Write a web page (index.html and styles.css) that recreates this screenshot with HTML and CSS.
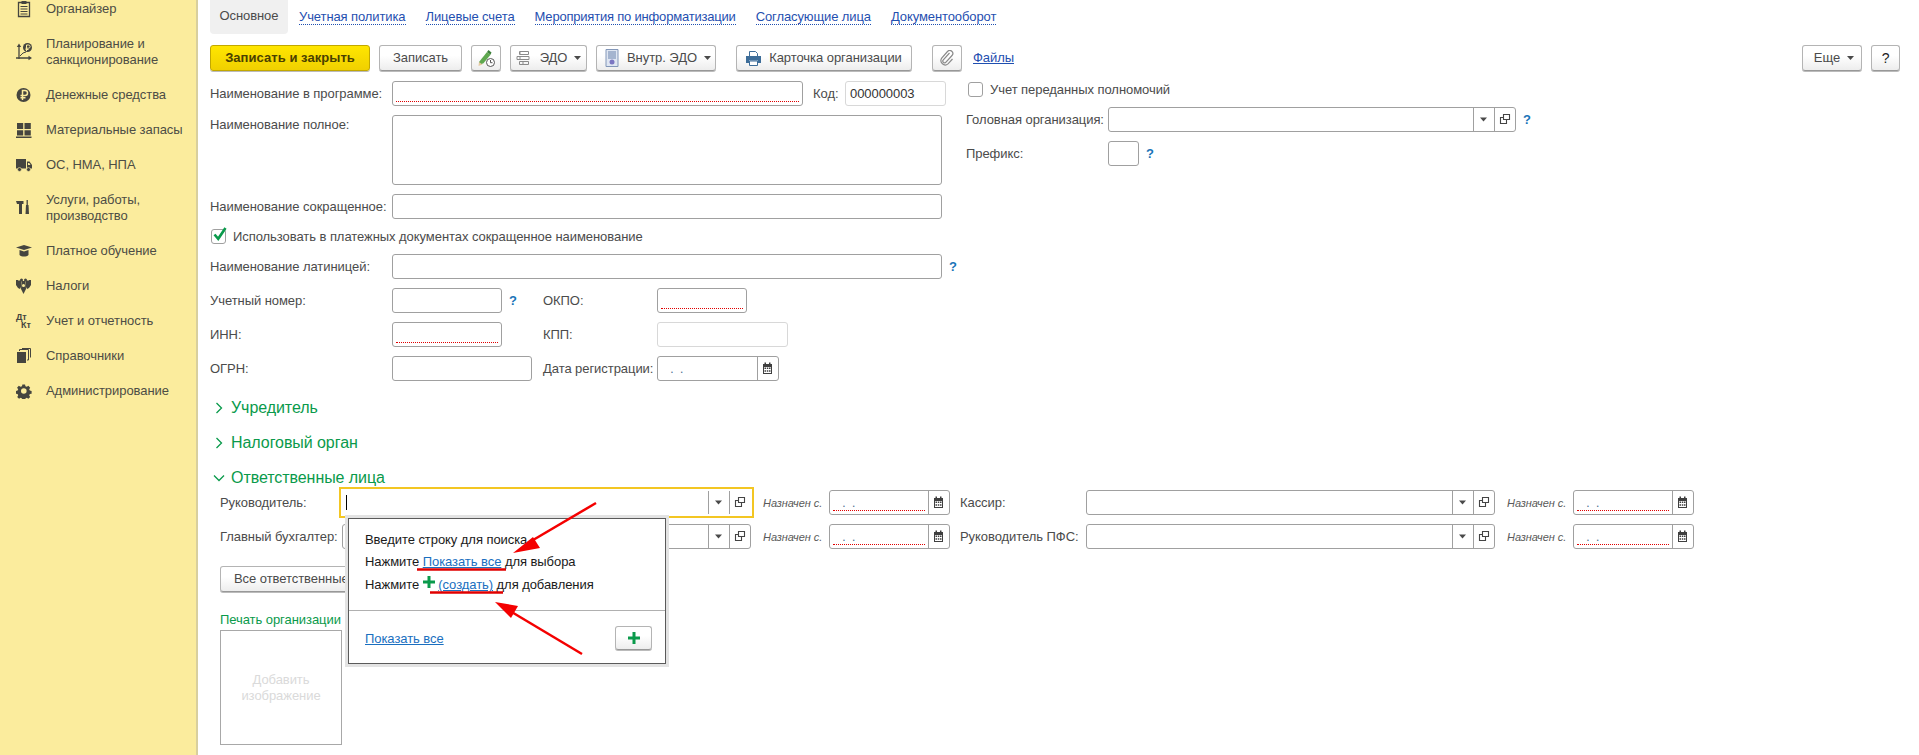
FILE: index.html
```
<!DOCTYPE html>
<html lang="ru">
<head>
<meta charset="utf-8">
<title>Организация</title>
<link rel="stylesheet" href="styles.css">
</head>
<body>
<svg class="defs" width="0" height="0">
  <symbol id="i-drop" viewBox="0 0 21 25"><path d="M7 10.500h7l-3.500 4z" fill="#4a4a4a"/></symbol>
  <symbol id="i-open" viewBox="0 0 21 25"><path d="M9.500 7.500h6v5h-6z M9.500 10.500h-3v6h6v-4" fill="none" stroke="#444" stroke-width="1.100"/></symbol>
  <symbol id="i-cal" viewBox="0 0 21 25"><path d="M6 8h9v10H6z" fill="#3f3f3f"/><path d="M7.500 6.500h1.500v2.500H7.500zM12 6.500h1.500v2.500H12z" fill="#3f3f3f"/><path d="M7 11h7v6H7z" fill="#fff"/><path d="M7.500 11.500h1.500v1.500H7.500zM9.800 11.500h1.500v1.500H9.800zM12 11.500h1.500v1.500H12zM7.500 14.300h1.500v1.500H7.500zM9.800 14.300h1.500v1.500H9.800zM12 14.300h1.500v1.500H12z" fill="#3f3f3f"/></symbol>
  <symbol id="i-plus" viewBox="0 0 12 12"><path d="M4.500 0h3v4.500H12v3H7.500V12h-3V7.500H0v-3h4.500z" fill="#0a9a4b"/></symbol>
  <symbol id="i-caret" viewBox="0 0 7 4"><path d="M0 0h7L3.500 4z" fill="#4a4a4a"/></symbol>
</svg>

<aside class="side">
  <nav class="nav">
    <a class="nav-item"><span class="nav-ic"><svg width="16" height="18" viewBox="0 0 16 18"><path d="M2.500 2.500h11v14h-11z" fill="none" stroke="#45453f" stroke-width="1.300"/><path d="M5.500 1h5v3h-5z" fill="#45453f"/><path d="M4.500 6.500h7M4.500 9h7M4.500 11.500h7M4.500 14h7" stroke="#45453f"/></svg></span><span>Органайзер</span></a>
    <a class="nav-item"><span class="nav-ic"><svg width="17" height="18" viewBox="0 0 17 18"><path d="M3 16V3M0 15h14" fill="none" stroke="#45453f" stroke-width="1.300"/><path d="M3 0.500L.8 4h4.400zM16 15l-3.500-2.200v4.400z" fill="#45453f"/><path d="M4 13l3-3 3-1" fill="none" stroke="#45453f"/><circle cx="11.500" cy="4.500" r="4.500" fill="#45453f"/><path d="M10.500 8V2h2a1.500 1.500 0 0 1 0 3.200h-3M9.500 6.500h3" fill="none" stroke="#fbec9d"/></svg></span><span>Планирование и<br>санкционирование</span></a>
    <a class="nav-item"><span class="nav-ic"><svg width="16" height="16" viewBox="0 0 16 16"><circle cx="7.500" cy="8" r="7" fill="#45453f"/><path d="M6.500 13V3.500h2.500a2.500 2.500 0 0 1 0 5H4.500M4.500 10.700h5" fill="none" stroke="#fbec9d" stroke-width="1.500"/></svg></span><span>Денежные средства</span></a>
    <a class="nav-item"><span class="nav-ic"><svg width="16" height="16" viewBox="0 0 16 16"><path d="M1 1h6.200v6H1zM8.500 1h6.300v6H8.500zM1 8.200h6.200v5.300H1zM8.500 8.200h6.300v5.300H8.500zM0 14.500h15.500V16H0z" fill="#45453f"/></svg></span><span>Материальные запасы</span></a>
    <a class="nav-item"><span class="nav-ic"><svg width="16" height="14" viewBox="0 0 16 14"><path d="M0 1h10v9.500H0z" fill="#45453f"/><path d="M11 3.500h2.500L16 7v3.500h-5z" fill="#45453f"/><path d="M12 5h1.200l1.300 2H12z" fill="#fbec9d"/><circle cx="3.500" cy="11.500" r="2" fill="#45453f" stroke="#fbec9d" stroke-width=".6"/><circle cx="12.500" cy="11.500" r="2" fill="#45453f" stroke="#fbec9d" stroke-width=".6"/></svg></span><span>ОС, НМА, НПА</span></a>
    <a class="nav-item"><span class="nav-ic"><svg width="15" height="15" viewBox="0 0 15 15"><path d="M0 1h7.500v3H6v10H3V4H1z" fill="#45453f"/><path d="M11.200 0v5" stroke="#45453f" stroke-width="1.300"/><path d="M10 5h2.500l.5 9h-3.500z" fill="#45453f"/></svg></span><span>Услуги, работы,<br>производство</span></a>
    <a class="nav-item"><span class="nav-ic"><svg width="16" height="14" viewBox="0 0 16 14"><path d="M8 1L16 3.500 8 6 0 3.500z" fill="#45453f"/><path d="M3.500 6v5c2 2 7 2 9 0V6L8 7.500z" fill="#45453f"/></svg></span><span>Платное обучение</span></a>
    <a class="nav-item"><span class="nav-ic"><svg width="16" height="16" viewBox="0 0 16 16"><path d="M0 2h2l1 1 1-1 1 1v6l-1 2-2-1-2-3zM15 2h-2l-1 1-1-1-1 1v6l1 2 2-1 2-3z" fill="#45453f"/><circle cx="5.500" cy="2" r="1.500" fill="#45453f"/><circle cx="9.500" cy="2" r="1.500" fill="#45453f"/><path d="M5.500 3h4l.5 8-1.500 3-1 2-1-2-1.500-3z" fill="#45453f"/><circle cx="7.500" cy="7.500" r="1.500" fill="#fbec9d"/></svg></span><span>Налоги</span></a>
    <a class="nav-item"><span class="nav-ic dtkt"><b>Дт</b><b class="kt">Кт</b></span><span>Учет и отчетность</span></a>
    <a class="nav-item"><span class="nav-ic"><svg width="15" height="15" viewBox="0 0 15 15"><path d="M1 4h9v11H1z" fill="#45453f"/><path d="M3.500 3V1.500h9V12H11M6 .5h8.500v9" fill="none" stroke="#45453f"/></svg></span><span>Справочники</span></a>
    <a class="nav-item"><span class="nav-ic"><svg width="16" height="16" viewBox="0 0 16 16"><path d="M6.500 1h3l.4 2 1.500.7 1.800-1.100 2 2-1.100 1.800.7 1.500 2 .4v3l-2 .4-.7 1.500 1.100 1.800-2 2-1.800-1.100-1.500.7-.4 2h-3l-.4-2-1.500-.7-1.800 1.100-2-2 1.100-1.800-.7-1.500-2-.4v-3l2-.4.700-1.500L.6 4.600l2-2 1.800 1.100 1.700-.7z" transform="translate(.5 .5) scale(.9)" fill="#45453f"/><circle cx="7.800" cy="8" r="2.800" fill="#fbec9d"/></svg></span><span>Администрирование</span></a>
  </nav>
</aside>

<main class="main">
  <div class="tabs">
    <span class="tab tab-on">Основное</span>
    <a class="tab">Учетная политика</a>
    <a class="tab">Лицевые счета</a>
    <a class="tab tab-long">Мероприятия по информатизации</a>
    <a class="tab">Согласующие лица</a>
    <a class="tab">Документооборот</a>
  </div>

  <div class="toolbar">
    <button class="btn btn-main w160">Записать и закрыть</button>
    <button class="btn w83">Записать</button>
    <button class="btn w30"><svg width="18" height="18" viewBox="0 0 18 18"><path d="M2 13L10 3l3.500 2.800-7 8.500L2 16z" fill="#5fa84f"/><path d="M2 13l3.500 2.500L1.500 17z" fill="#e5c9a0"/><path d="M10 3l1.500-2 3 2.500L13.500 5.800z" fill="#3d7f3a"/><circle cx="13.500" cy="13.500" r="4" fill="#fff" stroke="#555"/><path d="M13.500 11v2.700h2" fill="none" stroke="#555"/></svg></button>
    <button class="btn w77 has-ic"><svg width="16" height="16" viewBox="0 0 16 16"><path d="M3.500 1.500h9v3h-9zM1 6.500h12v3H1zM3.500 11.500h9v3h-9z" fill="none" stroke="#8a8a8a"/><path d="M3 3h2M3 8h2M6 13h2" stroke="#8a8a8a"/></svg><span>ЭДО</span><svg class="caret" width="7" height="4"><use href="#i-caret"/></svg></button>
    <button class="btn w120 has-ic pl4"><svg width="14" height="18" viewBox="0 0 14 18"><path d="M1 .5h12v17H1z" fill="#dfe6f2" stroke="#8296b8"/><path d="M3 3h8M3 5h8M3 7h8M3 9h8" stroke="#6a83ad"/><circle cx="7" cy="13" r="2.500" fill="#7b76c2"/></svg><span>Внутр. ЭДО</span><svg class="caret" width="7" height="4"><use href="#i-caret"/></svg></button>
    <button class="btn w176 has-ic ml20"><svg width="15" height="15" viewBox="0 0 15 15"><path d="M3.500 .5h6l2 2v3h-8z" fill="#fff" stroke="#3d6d99"/><path d="M0 5h15v7H12V9.500H3V12H0z" fill="#3d6d99"/><path d="M3.500 10h8v4.500h-8z" fill="#fff" stroke="#3d6d99"/></svg><span>Карточка организации</span></button>
    <button class="btn w30 ml20"><svg width="14" height="16" viewBox="0 0 14 16"><path d="M9.500 3L3.300 9.800a1.800 1.800 0 0 0 2.700 2.400l6-6.700a3 3 0 0 0-4.500-4L1.700 8.200a4.300 4.300 0 0 0 6.300 5.700L12.500 9" fill="none" stroke="#8a8a8a" stroke-width="1.200"/></svg></button>
    <a class="link files">Файлы</a>
    <button class="btn w60 ml-auto has-ic pl4"><span>Еще</span><svg class="caret" width="7" height="4"><use href="#i-caret"/></svg></button>
    <button class="btn w29 q">?</button>
  </div>

  <div class="top-form">
    <div class="col-left">
      <div class="row">
        <label class="lbl w182">Наименование в программе:</label>
        <div class="fld req w411"></div>
        <label class="lbl code-l">Код:</label>
        <div class="fld dis w101 code-v">000000003</div>
      </div>
      <div class="row row-top">
        <label class="lbl w182">Наименование полное:</label>
        <div class="fld ta w550"></div>
      </div>
      <div class="row">
        <label class="lbl w182">Наименование сокращенное:</label>
        <div class="fld w550"></div>
      </div>
      <div class="row chk-row">
        <span class="chk"><svg width="16" height="16" viewBox="0 0 16 16"><path d="M2.500 7.500l3.700 4.300L13.500 1" fill="none" stroke="#0a9a4b" stroke-width="2.600"/></svg></span>
        <span class="lbl">Использовать в платежных документах сокращенное наименование</span>
      </div>
      <div class="row">
        <label class="lbl w182">Наименование латиницей:</label>
        <div class="fld w550"></div>
        <span class="help">?</span>
      </div>
      <div class="row">
        <label class="lbl w182">Учетный номер:</label>
        <div class="fld w110"></div>
        <span class="help help-slot">?</span>
        <label class="lbl w114 ml27">ОКПО:</label>
        <div class="fld req w90"></div>
      </div>
      <div class="row">
        <label class="lbl w182">ИНН:</label>
        <div class="fld req w110"></div>
        <label class="lbl w114 ml41">КПП:</label>
        <div class="fld dis w131"></div>
      </div>
      <div class="row">
        <label class="lbl w182">ОГРН:</label>
        <div class="fld w140"></div>
        <label class="lbl w114 ml11">Дата регистрации:</label>
        <div class="fld w122 combo"><span class="date-v"> .  .</span><span class="cb"><svg width="21" height="25"><use href="#i-cal"/></svg></span></div>
      </div>
    </div>
    <div class="col-right">
      <div class="row chk-row r-chk">
        <span class="chk"></span>
        <span class="lbl">Учет переданных полномочий</span>
      </div>
      <div class="row">
        <label class="lbl w142">Головная организация:</label>
        <div class="fld w408 combo"><span class="cb"><svg width="21" height="25"><use href="#i-drop"/></svg></span><span class="cb"><svg width="21" height="25"><use href="#i-open"/></svg></span></div>
        <span class="help">?</span>
      </div>
      <div class="row">
        <label class="lbl w142">Префикс:</label>
        <div class="fld w31"></div>
        <span class="help">?</span>
      </div>
    </div>
  </div>

  <div class="sec sec1"><svg width="8" height="12" viewBox="0 0 8 12"><path d="M1.500 1l5 5-5 5" fill="none" stroke="#0a9a4b" stroke-width="1.300"/></svg><span>Учредитель</span></div>
  <div class="sec sec2"><svg width="8" height="12" viewBox="0 0 8 12"><path d="M1.500 1l5 5-5 5" fill="none" stroke="#0a9a4b" stroke-width="1.300"/></svg><span>Налоговый орган</span></div>
  <div class="sec sec-open"><svg width="12" height="8" viewBox="0 0 12 8"><path d="M1 1.500l5 5 5-5" fill="none" stroke="#0a9a4b" stroke-width="1.300"/></svg><span>Ответственные лица</span></div>

  <div class="resp">
    <div class="row">
      <label class="lbl w122">Руководитель:</label>
      <div class="fld focus w409 combo"><i class="cursor"></i><span class="cb"><svg width="21" height="25"><use href="#i-drop"/></svg></span><span class="cb"><svg width="21" height="25"><use href="#i-open"/></svg></span></div>
      <label class="lbl-i">Назначен с.</label>
      <div class="fld req w121 combo"><span class="date-v"> .  .</span><span class="cb"><svg width="21" height="25"><use href="#i-cal"/></svg></span></div>
      <label class="lbl w126 ml10">Кассир:</label>
      <div class="fld w409 combo"><span class="cb"><svg width="21" height="25"><use href="#i-drop"/></svg></span><span class="cb"><svg width="21" height="25"><use href="#i-open"/></svg></span></div>
      <label class="lbl-i">Назначен с.</label>
      <div class="fld req w121 combo"><span class="date-v"> .  .</span><span class="cb"><svg width="21" height="25"><use href="#i-cal"/></svg></span></div>
    </div>
    <div class="row">
      <label class="lbl w122">Главный бухгалтер:</label>
      <div class="fld w409 combo"><span class="cb"><svg width="21" height="25"><use href="#i-drop"/></svg></span><span class="cb"><svg width="21" height="25"><use href="#i-open"/></svg></span></div>
      <label class="lbl-i">Назначен с.</label>
      <div class="fld req w121 combo"><span class="date-v"> .  .</span><span class="cb"><svg width="21" height="25"><use href="#i-cal"/></svg></span></div>
      <label class="lbl w126 ml10">Руководитель ПФС:</label>
      <div class="fld w409 combo"><span class="cb"><svg width="21" height="25"><use href="#i-drop"/></svg></span><span class="cb"><svg width="21" height="25"><use href="#i-open"/></svg></span></div>
      <label class="lbl-i">Назначен с.</label>
      <div class="fld req w121 combo"><span class="date-v"> .  .</span><span class="cb"><svg width="21" height="25"><use href="#i-cal"/></svg></span></div>
    </div>
  </div>

  <button class="btn all-btn">Все ответственные</button>
  <div class="stamp-l">Печать организации</div>
  <div class="stamp"><span>Добавить<br>изображение</span></div>
</main>

<div class="popup">
  <div class="pop-body">
    <p>Введите строку для поиска</p>
    <p>Нажмите <a class="plink">Показать все</a> для выбора</p>
    <p>Нажмите <svg class="pop-plus" width="12" height="12"><use href="#i-plus"/></svg> <a class="plink">(создать)</a> для добавления</p>
  </div>
  <div class="pop-foot">
    <a class="plink foot-link">Показать все</a>
    <button class="btn plus-btn"><svg width="12" height="12"><use href="#i-plus"/></svg></button>
  </div>
</div>

<svg class="marks" width="1919" height="755" viewBox="0 0 1919 755">
  <path d="M596 503L528 543" stroke="#f40000" stroke-width="2.500" fill="none"/>
  <path d="M513 553l20-16 7 11z" fill="#f40000"/>
  <path d="M417 569.500H506" stroke="#e00000" stroke-width="2.500"/>
  <path d="M430 592.500H503" stroke="#e00000" stroke-width="2.500"/>
  <path d="M582 654L510 611" stroke="#f40000" stroke-width="2.500" fill="none"/>
  <path d="M495 602l23 4-7 12z" fill="#f40000"/>
</svg>
</body>
</html>
```
FILE: styles.css
```
* { box-sizing: border-box; }
html, body { margin: 0; height: 755px; overflow: hidden; }
body { display: flex; background: #fff; font: 13px/16px "Liberation Sans", Arial, sans-serif; letter-spacing: -0.06px; color: #4b4b4b; position: relative; }
.defs { position: absolute; }
a { cursor: pointer; }

.side { width: 198px; flex: none; background: #fbec9d; border-right: 2px solid #d8cf9e; overflow: hidden; }
.nav { margin-top: -9px; display: flex; flex-direction: column; }
.nav-item { display: flex; align-items: center; padding: 9.500px 0 9.500px 16px; color: #4d4d45; line-height: 16px; }
.nav-ic { width: 18px; height: 16px; margin-right: 12px; display: flex; align-items: center; }
.dtkt { flex-direction: column; align-items: flex-start; font-size: 9px; line-height: 8px; color: #45453f; }
.dtkt b { display: block; }
.dtkt .kt { margin-left: 5px; }

.main { flex: 1; padding: 0 19px 0 12px; min-width: 0; }
.tabs { display: flex; height: 34px; align-items: flex-start; }
.tab { height: 32px; line-height: 32px; margin-right: 20px; color: #1f4fb0; letter-spacing: -0.1px; }
.tabs a { height: auto; line-height: 15px; margin-top: 9px; border-bottom: 1px dotted #1f4fb0; }
.tabs .tab-long { letter-spacing: -0.2px; }
.tab-on { width: 78px; text-align: center; background: #f0f0f0; border-radius: 0 0 4px 4px; color: #4b4b4b; margin-right: 11px; height: 34px; }

.toolbar { display: flex; margin-top: 11px; gap: 9px; align-items: center; height: 26px; }
.btn { height: 26px; padding: 0; border: 1px solid #b4b4b4; border-bottom-color: #989898; border-radius: 3px; background: linear-gradient(#fff 40%, #ededed); font: inherit; letter-spacing: inherit; color: #4b4b4b; display: flex; align-items: center; justify-content: center; box-shadow: 0 1px 0 #bbb; }
.btn-main { background: linear-gradient(#ffe600, #f0d000); border-color: #c2a800; font-weight: bold; color: #4a4000; letter-spacing: 0.05px; }
.has-ic { gap: 8px; }
.pl4 { padding-left: 4px; }
.caret { margin-left: -1px; }
.w160 { width: 160px; } .w83 { width: 83px; } .w30 { width: 30px; } .w77 { width: 77px; } .w120 { width: 120px; } .w176 { width: 176px; } .w60 { width: 60px; } .w29 { width: 29px; }
.ml20 { margin-left: 11px; }
.ml-auto { margin-left: auto; }
.q { font-size: 14px; color: #222; }
.link, .plink { color: #1a6fc0; text-decoration: underline; }
.files { color: #1f4fb0; margin-left: 2px; }

.top-form { display: flex; margin-top: 10px; }
.col-left { width: 756px; flex: none; display: flex; flex-direction: column; gap: 9px; }
.col-right { flex: 1; display: flex; flex-direction: column; gap: 9px; }
.row { display: flex; align-items: center; }
.row-top { align-items: flex-start; }
.row-top .lbl { margin-top: 2px; }
.lbl { white-space: nowrap; flex: none; }
.w182 { width: 182px; } .w142 { width: 142px; } .w122 { width: 122px; } .w126 { width: 126px; } .w114 { width: 114px; }
.ml10 { margin-left: 10px; } .ml11 { margin-left: 11px; } .ml27 { margin-left: 27px; } .ml41 { margin-left: 41px; }
.fld { height: 25px; flex: none; position: relative; background: #fff; border: 1px solid #a0a0a0; border-radius: 3px; }
.req::after { content: ""; position: absolute; left: 3px; right: 3px; bottom: 3px; border-bottom: 1px dotted #e00000; }
.req.combo::after { right: 24px; }
.dis { border-color: #d8d8d8; }
.ta { height: 70px; }
.w411 { width: 411px; } .w101 { width: 101px; } .w550 { width: 550px; } .w110 { width: 110px; } .w90 { width: 90px; } .w131 { width: 131px; } .w140 { width: 140px; } .w408 { width: 408px; } .w31 { width: 31px; } .w409 { width: 409px; } .w121 { width: 121px; }
.code-l { margin-left: 10px; width: 32px; }
.code-v { color: #333; padding-left: 4px; line-height: 23px; }
.help { color: #1a74b8; font-weight: bold; margin-left: 7px; font-size: 13px; }
.help-slot { width: 7px; }
.chk-row { height: 17px; }
.chk { width: 15px; height: 15px; margin: 0 7px 0 1px; border: 1px solid #a0a0a0; border-radius: 3px; background: #fff; position: relative; flex: none; }
.chk svg { position: absolute; left: 0; top: -3px; }
.combo { display: flex; align-items: stretch; justify-content: flex-end; }
.date-v { flex: 1; white-space: pre; padding-left: 9px; color: #4b6a90; line-height: 25px; font-size: 12px; }
.cb { width: 21px; border-left: 1px solid #a0a0a0; flex: none; }
.cb svg { display: block; margin: -1px 0 0 -1px; }
.r-chk { padding-left: 1px; }

.sec { display: flex; align-items: center; height: 20px; font-size: 16px; color: #0a9a4b; padding-left: 5px; white-space: nowrap; }
.sec svg { margin-right: 8px; flex: none; }
.sec1 { margin-top: 17px; }
.sec2 { margin-top: 14.500px; }
.sec-open { padding-left: 3px; margin-top: 15.500px; }
.sec-open svg { margin-right: 6px; }
.resp { padding-left: 10px; margin-top: 2px; display: flex; flex-direction: column; gap: 9px; }
.focus { border-color: #fff; border-radius: 0; outline: 2px solid #f3c623; outline-offset: 1px; }
.cursor { position: absolute; left: 3px; top: 4px; height: 15px; width: 1px; background: #000; }
.lbl-i { width: 78px; flex: none; padding-left: 12px; font-style: italic; font-size: 11px; color: #5a5a5a; white-space: nowrap; }
.all-btn { margin: 17px 0 0 10px; width: 170px; justify-content: flex-start; padding-left: 13px; white-space: nowrap; }
.stamp-l { margin: 20px 0 0 10px; color: #0a9a4b; }
.stamp { margin: 2px 0 0 10px; width: 122px; height: 115px; border: 1px solid #a8a8a8; display: flex; align-items: center; justify-content: center; text-align: center; color: #dadada; }

.popup { position: absolute; left: 345px; top: 515px; margin: 3px; width: 318px; height: 146px; background: #fff; border: 1px solid #5a5a5a; outline: 3px solid #e3e3e3; color: #1a1a1a; }
.pop-body { height: 92px; padding: 13px 16px 0; border-bottom: 1px solid #b0b0b0; display: flex; flex-direction: column; gap: 6px; }
.pop-body p { margin: 0; white-space: nowrap; }
.pop-plus { vertical-align: 1px; }
.pop-foot { display: flex; align-items: center; justify-content: space-between; padding: 15px 13px 0 16px; }
.foot-link { margin-top: 2px; }
.plus-btn { width: 37px; height: 24px; }
.marks { position: absolute; left: 0; top: 0; pointer-events: none; }
```
